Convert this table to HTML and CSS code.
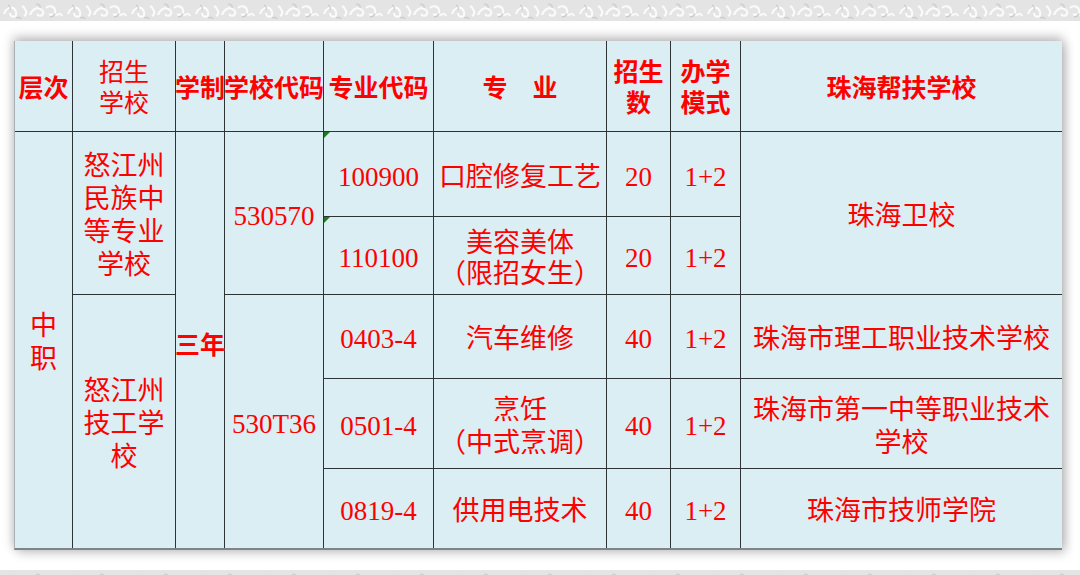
FILE: index.html
```html
<!DOCTYPE html>
<html lang="zh-CN">
<head>
<meta charset="utf-8">
<title>招生计划</title>
<link rel="stylesheet" href="styles.css">
</head>
<body>
<div class="page">
  <svg class="pattern pattern-top" width="1080" height="21" aria-hidden="true">
    <defs>
      <pattern id="orn" width="64" height="21" patternUnits="userSpaceOnUse">
        <rect width="64" height="21" fill="#e4e4e4"/>
        <path d="M4 14c3-8 10-8 12-2s-6 6-6 1M22 6c4 2 6 8 2 10M30 15c2-6 8-9 12-5s-2 8-5 4M46 8c3-3 8-2 9 2s-3 6-6 4M56 16c2-3 5-3 6 0" fill="none" stroke="#fafafa" stroke-width="2.2"/>
        <path d="M8 5c2 1 3 3 2 5M36 4c3 0 5 2 4 4M50 17c3 0 5-2 4-4M16 18c2-1 4-1 5 1" fill="none" stroke="#c9c9c9" stroke-width="1.2"/>
      </pattern>
    </defs>
    <rect width="1080" height="21" fill="url(#orn)"/>
  </svg>

  <div class="stage">
    <div class="grid">
      <div class="cell head c1"><span class="over">层次</span></div>
      <div class="cell head thin c2">招生<br>学校</div>
      <div class="cell head c3"><span class="over">学制</span></div>
      <div class="cell head c4"><span class="over">学校代码</span></div>
      <div class="cell head c5"><span class="over">专业代码</span></div>
      <div class="cell head c6">专　业</div>
      <div class="cell head c7">招生<br>数</div>
      <div class="cell head c8">办学<br>模式</div>
      <div class="cell head c9">珠海帮扶学校</div>

      <div class="cell body c1 r2-6">中<br>职</div>
      <div class="cell body c2 r2-3">怒江州<br>民族中<br>等专业<br>学校</div>
      <div class="cell body c2 r4-6">怒江州<br>技工学<br>校</div>
      <div class="cell body bold c3 r2-6"><span class="over">三年</span></div>
      <div class="cell body num c4 r2-3">530570</div>
      <div class="cell body num c4 r4-6">530T36</div>

      <div class="cell body num c5 r2 flag">100900</div>
      <div class="cell body c6 r2">口腔修复工艺</div>
      <div class="cell body num c7 r2">20</div>
      <div class="cell body num c8 r2">1+2</div>
      <div class="cell body c9 r2-3">珠海卫校</div>

      <div class="cell body num c5 r3 flag">110100</div>
      <div class="cell body tight c6 r3">美容美体<br>（限招女生）</div>
      <div class="cell body num c7 r3">20</div>
      <div class="cell body num c8 r3">1+2</div>

      <div class="cell body num c5 r4">0403-4</div>
      <div class="cell body c6 r4">汽车维修</div>
      <div class="cell body num c7 r4">40</div>
      <div class="cell body num c8 r4">1+2</div>
      <div class="cell body c9 r4">珠海市理工职业技术学校</div>

      <div class="cell body num c5 r5">0501-4</div>
      <div class="cell body c6 r5">烹饪<br>（中式烹调）</div>
      <div class="cell body num c7 r5">40</div>
      <div class="cell body num c8 r5">1+2</div>
      <div class="cell body c9 r5">珠海市第一中等职业技术<br>学校</div>

      <div class="cell body num c5 r6">0819-4</div>
      <div class="cell body c6 r6">供用电技术</div>
      <div class="cell body num c7 r6">40</div>
      <div class="cell body num c8 r6">1+2</div>
      <div class="cell body c9 r6">珠海市技师学院</div>
    </div>
  </div>

  <svg class="pattern pattern-bottom" width="1080" height="8" aria-hidden="true">
    <defs>
      <pattern id="orn2" width="64" height="21" patternUnits="userSpaceOnUse">
        <rect width="64" height="21" fill="#e4e4e4"/>
        <path d="M4 14c3-8 10-8 12-2s-6 6-6 1M22 6c4 2 6 8 2 10M30 15c2-6 8-9 12-5s-2 8-5 4M46 8c3-3 8-2 9 2s-3 6-6 4M56 16c2-3 5-3 6 0" fill="none" stroke="#fafafa" stroke-width="2.2"/>
        <path d="M8 5c2 1 3 3 2 5M36 4c3 0 5 2 4 4M50 17c3 0 5-2 4-4M16 18c2-1 4-1 5 1" fill="none" stroke="#c9c9c9" stroke-width="1.2"/>
      </pattern>
    </defs>
    <rect width="1080" height="8" fill="url(#orn2)"/>
  </svg>
</div>
</body>
</html>
```
FILE: styles.css
```css
html, body {
  margin: 0;
  padding: 0;
  background: #ffffff;
}

.page {
  width: 1080px;
  height: 575px;
  overflow: hidden;
  display: flex;
  flex-direction: column;
}

.pattern {
  display: block;
  flex: none;
}

.stage {
  flex: none;
  padding: 20px 0 20px 14px;
}

.grid {
  display: grid;
  width: 1047px;
  grid-template-columns: 57px 102px 48px 98px 109px 172px 63px 69px 321px;
  grid-template-rows: 90px 84px 77px 83px 89px 79px;
  gap: 1px;
  background: #2e3336;
  border-left: 1px solid #a9b2b6;
  border-bottom: 2px solid #7d8588;
  box-shadow: 0 -3px 10px 1px rgba(0, 0, 0, 0.26), 4px 4px 10px rgba(0, 0, 0, 0.14);
}

.cell {
  background: #daeef3;
  color: #ff0000;
  font-family: "Liberation Serif", "Noto Sans CJK SC", serif;
  font-size: 27px;
  line-height: 33px;
  display: flex;
  align-items: center;
  justify-content: center;
  text-align: center;
  white-space: nowrap;
  position: relative;
}

.body {
  padding-top: 6px;
}

.head {
  font-family: "Noto Sans CJK SC", sans-serif;
  font-weight: 700;
  font-size: 25px;
  line-height: 31px;
}

.head.thin {
  font-weight: 400;
}

.bold {
  font-family: "Noto Sans CJK SC", sans-serif;
  font-weight: 700;
  font-size: 25px;
}

.tight {
  line-height: 31px;
}

.over {
  position: relative;
  z-index: 2;
}

.flag::before {
  content: "";
  position: absolute;
  left: 0;
  top: 0;
  border-top: 6px solid #1f7a1f;
  border-right: 6px solid transparent;
}

.c1 { grid-column: 1; }
.c2 { grid-column: 2; }
.c3 { grid-column: 3; }
.c4 { grid-column: 4; }
.c5 { grid-column: 5; }
.c6 { grid-column: 6; }
.c7 { grid-column: 7; }
.c8 { grid-column: 8; }
.c9 { grid-column: 9; }

.head { grid-row: 1; }
.r2 { grid-row: 2; }
.r3 { grid-row: 3; }
.r4 { grid-row: 4; }
.r5 { grid-row: 5; }
.r6 { grid-row: 6; }
.r2-3 { grid-row: 2 / 4; }
.r4-6 { grid-row: 4 / 7; }
.r2-6 { grid-row: 2 / 7; }
```
